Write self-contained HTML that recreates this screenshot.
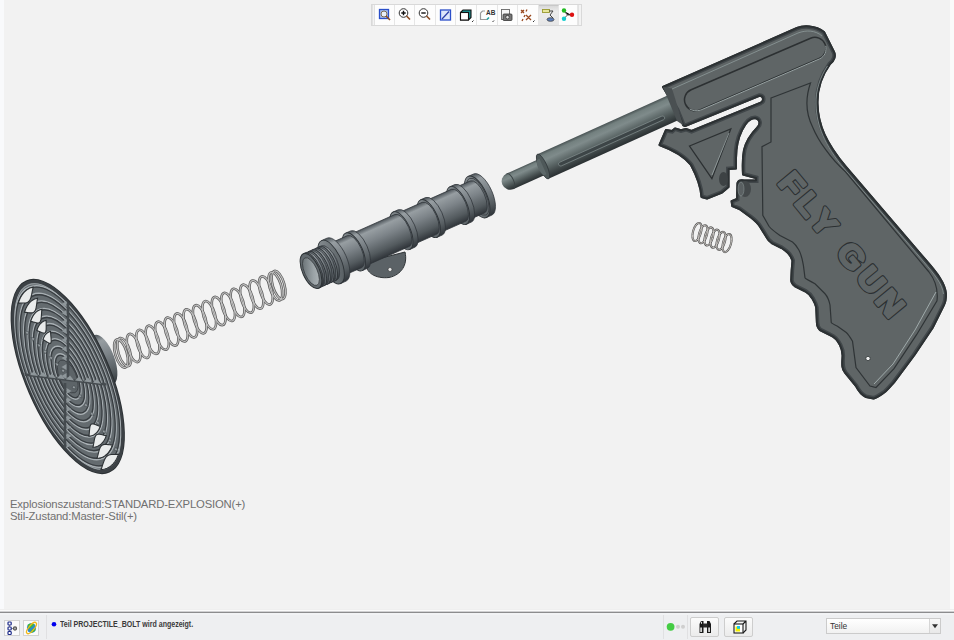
<!DOCTYPE html>
<html><head><meta charset="utf-8">
<style>
*{margin:0;padding:0;box-sizing:border-box}
html,body{width:954px;height:640px;overflow:hidden;background:#f2f2f2;font-family:"Liberation Sans",sans-serif}
#vp{position:absolute;left:0;top:0;width:954px;height:640px}
.abs{position:absolute}
#lstrip{left:0;top:0;width:4px;height:610px;background:#f9fafc}
#rstrip{left:950px;top:0;width:4px;height:610px;background:#fafafa}
#sep0{left:0;top:609px;width:954px;height:1px;background:#efefef}
#sep1{left:0;top:610px;width:954px;height:1px;background:#fbfbfb}
#sep2{left:0;top:611px;width:954px;height:1px;background:#d0d0d2}
#sep3{left:0;top:612px;width:954px;height:1px;background:#8c8c8e}
#status{left:0;top:613px;width:954px;height:27px;background:linear-gradient(#f2f3f5 0,#f2f3f5 2px,#eeeff1 2px)}
#info{left:10px;top:498px;font-size:11.3px;line-height:12px;letter-spacing:-0.17px;color:#707070;white-space:pre}
#stxt{left:60px;top:620px;font-size:8.2px;font-weight:bold;color:#3a3a3a;white-space:pre;transform:scaleX(0.86);transform-origin:0 0}
#dd{left:826px;top:618px;width:115px;height:16px;border:1px solid #cbcbcb;background:linear-gradient(#ffffff,#f1f1f1)}
#ddbtn{left:929px;top:619px;width:11px;height:14px;border-left:1px solid #d6d6d6;background:linear-gradient(#f8f8f8,#e8e8e8)}
#ddtxt{left:830px;top:621px;font-size:8.4px;color:#333}
#tb{left:371px;top:4px;width:211px;height:22px;border:1px solid #d9d9d9;background:#f3f3f3}
.tbb{position:absolute;top:5px;height:20px;background:#fdfdfd;border-right:1px solid #e6e6e6}
.sbox{position:absolute;top:620px;width:16px;height:16px;border:1px solid #d2d2d2;background:#fafafa}
.vsep{position:absolute;top:615px;width:1px;height:24px;background:#e0e0e2}
.sbtn{position:absolute;top:617px;width:29px;height:20px;border:1px solid #cdcdcd;border-radius:2px;background:linear-gradient(#fbfbfb,#ebebeb)}
</style></head><body>
<div id="vp">
<div class="abs" id="lstrip"></div>
<div class="abs" id="rstrip"></div>
<div class="abs" id="sep0"></div>
<div class="abs" id="sep1"></div>
<div class="abs" id="sep2"></div>
<div class="abs" id="sep3"></div>
<div class="abs" id="status"></div>
<div class="abs" id="info">Explosionszustand:STANDARD-EXPLOSION(+)
Stil-Zustand:Master-Stil(+)</div>
<div class="abs" id="stxt">Teil PROJECTILE_BOLT wird angezeigt.</div>
<div class="abs" id="dd"></div>
<div class="abs" id="ddbtn"></div>
<div class="abs" id="ddtxt">Teile</div>
<div class="abs" id="tb"></div>
<div class="abs" style="left:372px;top:5px;width:3px;height:20px;border-left:1px solid #e2e2e2;border-right:1px solid #e2e2e2"></div>
<div class="tbb" style="left:375px;width:20px"></div>
<div class="tbb" style="left:395px;width:20px"></div>
<div class="tbb" style="left:415px;width:21px"></div>
<div class="tbb" style="left:436px;width:20px"></div>
<div class="tbb" style="left:456px;width:21px"></div>
<div class="tbb" style="left:477px;width:21px"></div>
<div class="tbb" style="left:498px;width:20px"></div>
<div class="tbb" style="left:518px;width:21px"></div>
<div class="tbb" style="left:539px;width:20px;background:linear-gradient(#d9d9d9,#ececec 30%,#e6e6e6);border-top:1px solid #c8c8c8"></div>
<div class="tbb" style="left:559px;width:19px"></div>
<div class="abs" style="left:578px;top:5px;width:3px;height:20px;border-left:1px solid #e2e2e2"></div>
<svg class="abs" style="left:0;top:0" width="954" height="30" viewBox="0 0 954 30">
<!-- 1 zoom fit -->
<rect x="379.5" y="9.5" width="9" height="9" fill="#a9bff0" stroke="#2b4fc9" stroke-width="1.3"/>
<circle cx="384" cy="14" r="3" fill="#e8eef8" stroke="#7a6a50" stroke-width="1"/>
<path d="M386,16 L390,20" stroke="#8a4a20" stroke-width="1.6"/>
<!-- 2 zoom in -->
<circle cx="403.5" cy="13" r="4.3" fill="#fff" stroke="#333" stroke-width="1"/>
<path d="M401.3,13 h4.4 M403.5,10.8 v4.4" stroke="#111" stroke-width="1.4"/>
<path d="M406.5,16 L410,19.5" stroke="#8a4a20" stroke-width="1.6"/>
<!-- 3 zoom out -->
<circle cx="423.5" cy="13" r="4.3" fill="#fff" stroke="#333" stroke-width="1"/>
<path d="M421.3,13 h4.4" stroke="#111" stroke-width="1.4"/>
<path d="M426.5,16 L430,19.5" stroke="#8a4a20" stroke-width="1.6"/>
<!-- 4 refit -->
<rect x="440.5" y="10" width="10" height="10" fill="#dce6fa" stroke="#2b4fc9" stroke-width="1.3"/>
<path d="M442,19 L449,11.5" stroke="#2b3fa9" stroke-width="1.3"/>
<!-- 5 box -->
<path d="M460.5,12.5 L463,10 L471,10 L471,17.5 L468.5,20 L460.5,20 Z" fill="#1a8c8c" stroke="#111" stroke-width="1.1"/>
<rect x="460.5" y="12.5" width="8" height="7.5" fill="#fff" stroke="#111" stroke-width="1.1"/>
<path d="M472,22 l1.5,-1.5" stroke="#333" stroke-width="1"/>
<!-- 6 AB -->
<path d="M480.5,13 L482.5,11 L485,11 M480.5,13 L480.5,19.5 L487.5,19.5" fill="none" stroke="#9a9a9a" stroke-width="1.2"/>
<path d="M487,19.5 L489,17.5" stroke="#1aa0a0" stroke-width="1.6"/>
<text x="486" y="15" font-family="Liberation Sans" font-size="6.5" font-weight="bold" fill="#333">AB</text>
<path d="M492.5,22 l1.5,-1.5" stroke="#333" stroke-width="1"/>
<!-- 7 camera -->
<rect x="501.5" y="9.5" width="8" height="10" fill="#f6f6f6" stroke="#666" stroke-width="0.9"/>
<rect x="503" y="14" width="9" height="6.5" rx="1" fill="#777" stroke="#333" stroke-width="0.8"/>
<circle cx="507.5" cy="17.2" r="1.8" fill="#ddd" stroke="#222" stroke-width="0.7"/>
<!-- 8 x marks -->
<path d="M521,10 l3,3 M524,10 l-3,3 M527,9.5 l-1,2 M525,15 l-1,2 M523,19 l-1,2 M526,15 l5,5 M531,15 l-5,5" stroke="#9a4a20" stroke-width="1.3"/>
<path d="M533,22 l1.5,-1.5" stroke="#333" stroke-width="1"/>
<!-- 9 pressed -->
<rect x="542.5" y="9.5" width="7" height="3" fill="#e6e69a" stroke="#9a9a30" stroke-width="0.9"/>
<path d="M549,11 L553,11 L550,15 L553,18" fill="none" stroke="#444" stroke-width="1"/>
<ellipse cx="550.5" cy="19.5" rx="3.5" ry="1.8" fill="#5a7fc0" stroke="#444" stroke-width="0.8"/>
<!-- 10 balls -->
<path d="M564,11 L567.5,15 L571.5,15 M567.5,15 L564,18.5" stroke="#555" stroke-width="1"/>
<circle cx="564" cy="10.5" r="2.2" fill="#22bb22"/>
<circle cx="572" cy="14.8" r="2.2" fill="#dd1111"/>
<circle cx="564" cy="18.8" r="2.2" fill="#11cccc"/>
</svg>
<div class="sbox" style="left:4px"></div>
<div class="sbox" style="left:23px"></div>
<div class="vsep" style="left:46px"></div>
<div class="vsep" style="left:663px"></div>
<div class="vsep" style="left:687px"></div>
<div class="sbtn" style="left:690px"></div>
<div class="sbtn" style="left:724px"></div>
<svg class="abs" style="left:0;top:612px" width="954" height="28" viewBox="0 612 954 28">
<!-- tree icon -->
<path d="M9.5,623.5 L9.5,633 M9.5,628.5 L14.5,628.5" stroke="#777" stroke-width="0.8"/>
<rect x="8" y="622" width="3.2" height="3" rx="0.8" fill="#fff" stroke="#1c2a8a" stroke-width="1.2"/>
<rect x="8" y="627" width="3.2" height="3" rx="0.8" fill="#fff" stroke="#1c2a8a" stroke-width="1.2"/>
<rect x="8" y="631.5" width="3.2" height="3" rx="0.8" fill="#fff" stroke="#1c2a8a" stroke-width="1.2"/>
<circle cx="15" cy="628.5" r="1.6" fill="#aaa" stroke="#555" stroke-width="1.1"/>
<!-- globe -->
<ellipse cx="31.5" cy="628" rx="4.6" ry="4.8" fill="#2a8ad0"/>
<path d="M27.5,625 Q31,622.5 34.5,624.5 Q32,627.5 29,629 Z" fill="#3cb83c"/>
<path d="M32,629 Q34.5,628 35.8,630 Q33,633.2 30.5,633 Z" fill="#3cb83c"/>
<ellipse cx="31.5" cy="628" rx="7" ry="2.6" transform="rotate(-50 31.5 628)" fill="none" stroke="#f2b818" stroke-width="1.3"/>
<!-- blue dot -->
<circle cx="54" cy="624.2" r="2.3" fill="#0000ee"/>
<!-- dots -->
<circle cx="670.6" cy="626.8" r="3.9" fill="#44cc44"/>
<circle cx="678" cy="626.8" r="2" fill="#cfcfcf"/>
<circle cx="683" cy="626.8" r="2" fill="#cfcfcf"/>
<!-- binoculars -->
<path d="M699.5,624 L701,621 L703.5,621 L703.5,633 L699.5,633 Z" fill="#1a1a1a"/>
<path d="M707,621 L709.5,621 L711,624 L711,633 L707,633 Z" fill="#1a1a1a"/>
<rect x="703" y="623.5" width="4.5" height="4" fill="#2a2a2a"/>
<rect x="700.3" y="627.5" width="1.6" height="4.5" fill="#e8e8e8"/>
<rect x="708.3" y="627.5" width="1.6" height="4.5" fill="#e8e8e8"/>
<rect x="701" y="621.8" width="1" height="2" fill="#ddd"/>
<!-- box -->
<path d="M734,624 L737,621 L746,621 L746,630 L743,633 M743,624 L746,621" fill="none" stroke="#1a1a1a" stroke-width="1.1"/>
<rect x="734" y="624" width="9" height="9" fill="#fff" stroke="#1a1a1a" stroke-width="1.1"/>
<rect x="735.5" y="626.5" width="4.5" height="5" fill="#f4f000"/>
<rect x="737" y="626" width="3" height="2.8" fill="#12c8f0"/>
<!-- dropdown arrow -->
<path d="M932,624.2 L938,624.2 L935,628.2 Z" fill="#333"/>
</svg>
<svg class="abs" style="left:0;top:0" width="954" height="640" viewBox="0 0 954 640">
<defs>
<linearGradient id="rodg" x1="0" y1="0" x2="0" y2="1">
<stop offset="0" stop-color="#485253"/><stop offset="0.12" stop-color="#73807f"/><stop offset="0.3" stop-color="#7f8b8b"/><stop offset="0.55" stop-color="#5f6a6a"/><stop offset="0.8" stop-color="#404849"/><stop offset="1" stop-color="#2a3032"/>
</linearGradient>
<linearGradient id="tubeg" x1="0" y1="0" x2="0" y2="1">
<stop offset="0" stop-color="#4e555a"/><stop offset="0.14" stop-color="#979ea2"/><stop offset="0.42" stop-color="#7c8388"/><stop offset="0.78" stop-color="#535a5e"/><stop offset="1" stop-color="#30353a"/>
</linearGradient>
<linearGradient id="boreg" x1="0" y1="0" x2="1" y2="1"><stop offset="0" stop-color="#5d6569"/><stop offset="0.6" stop-color="#9aa2a6"/><stop offset="1" stop-color="#b5bbbe"/></linearGradient>
<linearGradient id="faceg" x1="0" y1="0" x2="1" y2="1">
<stop offset="0" stop-color="#8e9599"/><stop offset="1" stop-color="#50575b"/>
</linearGradient>
</defs>
<g transform="translate(98,362) rotate(-20)">
<path d="M-14,-26.5 L6,-26.5 A11,26.5 0 0 1 6,26.5 L-14,26.5 Z" fill="url(#tubeg)"/>
</g>
<g transform="translate(67.75,376.5) rotate(66.5)">
<ellipse cx="0" cy="0" rx="103.9" ry="41.5" fill="#646b6f" stroke="#2b3033" stroke-width="1.8"/>
<ellipse cx="0" cy="0" rx="102.1" ry="39.9" fill="none" stroke="#3c4145" stroke-width="3.2"/>
<ellipse cx="0" cy="0" rx="99.7" ry="38.1" fill="none" stroke="#9ba2a6" stroke-width="0.9"/>
<ellipse cx="0" cy="0" rx="97.38" ry="39.06" fill="none" stroke="#a9b0b4" stroke-width="1.4"/>
<ellipse cx="0" cy="0" rx="95.78" ry="38.26" fill="none" stroke="#383d41" stroke-width="1.3"/>
<ellipse cx="0" cy="0" rx="89.27" ry="35.82" fill="none" stroke="#a9b0b4" stroke-width="1.4"/>
<ellipse cx="0" cy="0" rx="87.67" ry="35.02" fill="none" stroke="#383d41" stroke-width="1.3"/>
<ellipse cx="0" cy="0" rx="81.15" ry="32.57" fill="none" stroke="#a9b0b4" stroke-width="1.4"/>
<ellipse cx="0" cy="0" rx="79.55" ry="31.77" fill="none" stroke="#383d41" stroke-width="1.3"/>
<ellipse cx="0" cy="0" rx="73.03" ry="29.33" fill="none" stroke="#a9b0b4" stroke-width="1.4"/>
<ellipse cx="0" cy="0" rx="71.43" ry="28.53" fill="none" stroke="#383d41" stroke-width="1.3"/>
<ellipse cx="0" cy="0" rx="64.91" ry="26.09" fill="none" stroke="#a9b0b4" stroke-width="1.4"/>
<ellipse cx="0" cy="0" rx="63.31" ry="25.29" fill="none" stroke="#383d41" stroke-width="1.3"/>
<ellipse cx="0" cy="0" rx="56.8" ry="22.85" fill="none" stroke="#a9b0b4" stroke-width="1.4"/>
<ellipse cx="0" cy="0" rx="55.2" ry="22.05" fill="none" stroke="#383d41" stroke-width="1.3"/>
<ellipse cx="0" cy="0" rx="48.68" ry="19.6" fill="none" stroke="#a9b0b4" stroke-width="1.4"/>
<ellipse cx="0" cy="0" rx="47.08" ry="18.8" fill="none" stroke="#383d41" stroke-width="1.3"/>
<ellipse cx="0" cy="0" rx="40.56" ry="16.36" fill="none" stroke="#a9b0b4" stroke-width="1.4"/>
<ellipse cx="0" cy="0" rx="38.96" ry="15.56" fill="none" stroke="#383d41" stroke-width="1.3"/>
<ellipse cx="0" cy="0" rx="32.45" ry="13.12" fill="none" stroke="#a9b0b4" stroke-width="1.4"/>
<ellipse cx="0" cy="0" rx="30.85" ry="12.32" fill="none" stroke="#383d41" stroke-width="1.3"/>
<ellipse cx="0" cy="0" rx="24.33" ry="9.88" fill="none" stroke="#a9b0b4" stroke-width="1.4"/>
<ellipse cx="0" cy="0" rx="22.73" ry="9.08" fill="none" stroke="#383d41" stroke-width="1.3"/>
<ellipse cx="0" cy="0" rx="17.66" ry="8.3" fill="#5d6468" stroke="#3a3f43" stroke-width="0.8"/>
</g>
<clipPath id="dclip"><ellipse cx="67.75" cy="376.5" rx="101.4" ry="39.5" transform="rotate(66.5 67.75 376.5)"/></clipPath>
<g clip-path="url(#dclip)">
<path d="M68,284 L68,377 M65,383 L65,470" stroke="#454b4f" stroke-width="2.6"/>
<path d="M24,374.5 L106,384.5" stroke="#454b4f" stroke-width="2.6"/>
<path d="M66.5,292 l-5,3 l5,3 z" fill="#8e969a"/>
<path d="M66.5,301 l-5,3 l5,3 z" fill="#8e969a"/>
<path d="M66.5,310 l-5,3 l5,3 z" fill="#8e969a"/>
<path d="M66.5,319 l-5,3 l5,3 z" fill="#8e969a"/>
<path d="M66.5,328 l-5,3 l5,3 z" fill="#8e969a"/>
<path d="M66.5,337 l-5,3 l5,3 z" fill="#8e969a"/>
<path d="M66.5,346 l-5,3 l5,3 z" fill="#8e969a"/>
<path d="M66.5,355 l-5,3 l5,3 z" fill="#8e969a"/>
<path d="M66.5,364 l-5,3 l5,3 z" fill="#8e969a"/>
<path d="M66.5,373 l-5,3 l5,3 z" fill="#8e969a"/>
<path d="M66.5,388 l5,3 l-5,3 z" fill="#8e969a"/>
<path d="M66.5,397 l5,3 l-5,3 z" fill="#8e969a"/>
<path d="M66.5,406 l5,3 l-5,3 z" fill="#8e969a"/>
<path d="M66.5,415 l5,3 l-5,3 z" fill="#8e969a"/>
<path d="M66.5,424 l5,3 l-5,3 z" fill="#8e969a"/>
<path d="M66.5,433 l5,3 l-5,3 z" fill="#8e969a"/>
<path d="M66.5,442 l5,3 l-5,3 z" fill="#8e969a"/>
<path d="M66.5,451 l5,3 l-5,3 z" fill="#8e969a"/>
<path d="M66.5,460 l5,3 l-5,3 z" fill="#8e969a"/>
<path d="M30,375 l4,-4 l4,5 z" fill="#8e969a"/>
<path d="M39,376.1 l4,-4 l4,5 z" fill="#8e969a"/>
<path d="M48,377.2 l4,-4 l4,5 z" fill="#8e969a"/>
<path d="M57,378.3 l4,-4 l4,5 z" fill="#8e969a"/>
<path d="M66,379.4 l4,-4 l4,5 z" fill="#8e969a"/>
<path d="M75,380.5 l4,-4 l4,5 z" fill="#8e969a"/>
<path d="M84,381.6 l4,-4 l4,5 z" fill="#8e969a"/>
<path d="M93,382.7 l4,-4 l4,5 z" fill="#8e969a"/>
<path d="M29,332 l-4,-1 l2,4 z" fill="#9aa1a5" stroke="#3a4044" stroke-width="0.5"/>
<path d="M35,338.33 l-4,-1 l2,4 z" fill="#9aa1a5" stroke="#3a4044" stroke-width="0.5"/>
<path d="M41,344.67 l-4,-1 l2,4 z" fill="#9aa1a5" stroke="#3a4044" stroke-width="0.5"/>
<path d="M47,351 l-4,-1 l2,4 z" fill="#9aa1a5" stroke="#3a4044" stroke-width="0.5"/>
<path d="M53,357.33 l-4,-1 l2,4 z" fill="#9aa1a5" stroke="#3a4044" stroke-width="0.5"/>
<path d="M59,363.67 l-4,-1 l2,4 z" fill="#9aa1a5" stroke="#3a4044" stroke-width="0.5"/>
<path d="M65,370 l-4,-1 l2,4 z" fill="#9aa1a5" stroke="#3a4044" stroke-width="0.5"/>
<path d="M72,388 l4,1 l-2,-4 z" fill="#9aa1a5" stroke="#3a4044" stroke-width="0.5"/>
<path d="M78,396.86 l4,1 l-2,-4 z" fill="#9aa1a5" stroke="#3a4044" stroke-width="0.5"/>
<path d="M84,405.71 l4,1 l-2,-4 z" fill="#9aa1a5" stroke="#3a4044" stroke-width="0.5"/>
<path d="M90,414.57 l4,1 l-2,-4 z" fill="#9aa1a5" stroke="#3a4044" stroke-width="0.5"/>
<path d="M96,423.43 l4,1 l-2,-4 z" fill="#9aa1a5" stroke="#3a4044" stroke-width="0.5"/>
<path d="M102,432.29 l4,1 l-2,-4 z" fill="#9aa1a5" stroke="#3a4044" stroke-width="0.5"/>
<path d="M108,441.14 l4,1 l-2,-4 z" fill="#9aa1a5" stroke="#3a4044" stroke-width="0.5"/>
<path d="M114,450 l4,1 l-2,-4 z" fill="#9aa1a5" stroke="#3a4044" stroke-width="0.5"/>
</g>
<path d="M18.32,303.17 L18.8,301.67 L19.33,300.24 L19.9,298.87 L20.52,297.58 L21.17,296.35 L21.87,295.19 L22.61,294.1 L23.39,293.09 L24.21,292.15 L25.07,291.29 L25.96,290.5 L26.89,289.79 L27.86,289.15 L28.87,288.59 L29.91,288.11 L30.98,287.7 L32.08,287.38 L33.22,287.13 L33.22,287.13 L32.76,289.05 L32.35,290.98 L31.97,292.88 L31.59,294.69 L31.19,296.37 L30.74,297.89 L30.23,299.22 L29.64,300.34 L28.94,301.25 L28.14,301.96 L27.22,302.46 L26.19,302.79 L25.05,302.97 L23.82,303.05 L22.5,303.06 L21.13,303.06 L19.73,303.08 L18.32,303.17Z" fill="#e9ebeb" stroke="#2c3134" stroke-width="1.1"/>
<path d="M24.49,312.28 L24.92,310.96 L25.38,309.71 L25.88,308.51 L26.42,307.37 L27,306.3 L27.61,305.28 L28.25,304.33 L28.94,303.44 L29.65,302.62 L30.41,301.86 L31.19,301.17 L32.01,300.55 L32.86,299.99 L33.74,299.5 L34.65,299.08 L35.59,298.72 L36.56,298.44 L37.55,298.22 L37.55,298.22 L37.23,300.11 L36.96,302 L36.71,303.84 L36.46,305.59 L36.18,307.21 L35.86,308.65 L35.46,309.89 L34.98,310.92 L34.39,311.72 L33.69,312.31 L32.87,312.69 L31.93,312.88 L30.87,312.92 L29.72,312.85 L28.48,312.7 L27.18,312.52 L25.84,312.37 L24.49,312.28Z" fill="#e9ebeb" stroke="#2c3134" stroke-width="1.1"/>
<path d="M30.67,321.38 L31.03,320.25 L31.43,319.17 L31.86,318.15 L32.32,317.17 L32.82,316.24 L33.34,315.37 L33.9,314.56 L34.48,313.79 L35.1,313.09 L35.75,312.44 L36.42,311.84 L37.12,311.31 L37.85,310.83 L38.61,310.41 L39.39,310.04 L40.2,309.74 L41.03,309.49 L41.88,309.31 L41.88,309.31 L41.7,311.16 L41.57,313.02 L41.45,314.81 L41.33,316.5 L41.18,318.05 L40.97,319.41 L40.69,320.56 L40.32,321.49 L39.84,322.19 L39.23,322.66 L38.51,322.91 L37.66,322.97 L36.69,322.87 L35.62,322.64 L34.46,322.33 L33.23,321.99 L31.95,321.66 L30.67,321.38Z" fill="#e9ebeb" stroke="#2c3134" stroke-width="1.1"/>
<path d="M36.84,330.49 L37.15,329.54 L37.48,328.64 L37.84,327.78 L38.22,326.97 L38.64,326.19 L39.08,325.46 L39.54,324.78 L40.03,324.14 L40.55,323.55 L41.09,323.01 L41.65,322.51 L42.24,322.07 L42.84,321.66 L43.48,321.31 L44.13,321.01 L44.81,320.76 L45.5,320.55 L46.22,320.4 L46.22,320.4 L46.18,322.22 L46.18,324.03 L46.19,325.78 L46.2,327.41 L46.17,328.88 L46.09,330.17 L45.92,331.23 L45.66,332.07 L45.28,332.66 L44.78,333.01 L44.15,333.14 L43.4,333.06 L42.52,332.82 L41.52,332.44 L40.44,331.97 L39.28,331.46 L38.07,330.95 L36.84,330.49Z" fill="#e9ebeb" stroke="#2c3134" stroke-width="1.1"/>
<path d="M43.02,339.59 L43.26,338.83 L43.53,338.11 L43.82,337.42 L44.13,336.76 L44.46,336.14 L44.81,335.56 L45.19,335.01 L45.58,334.5 L45.99,334.02 L46.43,333.58 L46.88,333.19 L47.35,332.83 L47.84,332.5 L48.35,332.22 L48.87,331.98 L49.41,331.77 L49.97,331.61 L50.55,331.48 L50.55,331.48 L50.65,333.28 L50.78,335.05 L50.93,336.75 L51.07,338.32 L51.17,339.72 L51.2,340.93 L51.15,341.91 L51,342.64 L50.73,343.12 L50.33,343.36 L49.8,343.36 L49.13,343.16 L48.34,342.77 L47.43,342.24 L46.42,341.61 L45.33,340.92 L44.18,340.24 L43.02,339.59Z" fill="#e9ebeb" stroke="#2c3134" stroke-width="1.1"/>
<path d="M100.2,426.34 L99.82,427.35 L99.41,428.31 L98.97,429.21 L98.5,430.07 L98,430.87 L97.47,431.61 L96.9,432.31 L96.31,432.94 L95.69,433.52 L95.04,434.05 L94.37,434.51 L93.67,434.92 L92.94,435.28 L92.18,435.57 L91.4,435.8 L90.6,435.98 L89.78,436.1 L88.93,436.15 L88.93,436.15 L89.15,434.42 L89.31,432.68 L89.46,431 L89.6,429.41 L89.76,427.98 L89.98,426.72 L90.26,425.68 L90.63,424.86 L91.1,424.28 L91.7,423.93 L92.41,423.8 L93.24,423.87 L94.2,424.11 L95.26,424.48 L96.41,424.94 L97.64,425.43 L98.91,425.92 L100.2,426.34Z" fill="#e9ebeb" stroke="#2c3134" stroke-width="1.1"/>
<path d="M106.31,435.64 L105.86,436.84 L105.38,437.97 L104.85,439.05 L104.3,440.06 L103.7,441.01 L103.07,441.89 L102.4,442.71 L101.7,443.47 L100.97,444.16 L100.2,444.78 L99.4,445.33 L98.56,445.82 L97.7,446.23 L96.81,446.58 L95.88,446.86 L94.93,447.07 L93.96,447.2 L92.95,447.27 L92.95,447.27 L93.32,445.53 L93.65,443.77 L93.94,442.05 L94.22,440.43 L94.53,438.93 L94.87,437.61 L95.29,436.49 L95.78,435.59 L96.38,434.91 L97.09,434.45 L97.91,434.21 L98.85,434.15 L99.9,434.25 L101.06,434.47 L102.3,434.77 L103.6,435.1 L104.95,435.4 L106.31,435.64Z" fill="#e9ebeb" stroke="#2c3134" stroke-width="1.1"/>
<path d="M112.42,444.94 L111.9,446.32 L111.34,447.64 L110.74,448.88 L110.09,450.05 L109.4,451.15 L108.67,452.17 L107.9,453.12 L107.09,453.99 L106.24,454.79 L105.35,455.51 L104.43,456.15 L103.46,456.71 L102.47,457.19 L101.43,457.59 L100.36,457.91 L99.26,458.15 L98.13,458.31 L96.97,458.39 L96.97,458.39 L97.5,456.64 L97.98,454.86 L98.42,453.11 L98.85,451.44 L99.29,449.89 L99.77,448.51 L100.32,447.31 L100.94,446.32 L101.65,445.54 L102.48,444.98 L103.41,444.62 L104.45,444.43 L105.61,444.39 L106.85,444.47 L108.18,444.6 L109.57,444.76 L110.99,444.89 L112.42,444.94Z" fill="#e9ebeb" stroke="#2c3134" stroke-width="1.1"/>
<path d="M118.53,454.24 L117.94,455.81 L117.31,457.3 L116.62,458.71 L115.89,460.04 L115.11,461.29 L114.28,462.45 L113.4,463.53 L112.48,464.52 L111.52,465.42 L110.51,466.24 L109.46,466.96 L108.36,467.6 L107.23,468.15 L106.06,468.6 L104.85,468.97 L103.6,469.24 L102.31,469.42 L100.99,469.51 L100.99,469.51 L101.68,467.75 L102.31,465.94 L102.9,464.16 L103.47,462.45 L104.06,460.85 L104.67,459.4 L105.35,458.13 L106.09,457.05 L106.93,456.18 L107.87,455.5 L108.91,455.02 L110.06,454.71 L111.31,454.53 L112.65,454.46 L114.06,454.44 L115.53,454.43 L117.03,454.38 L118.53,454.24Z" fill="#e9ebeb" stroke="#2c3134" stroke-width="1.1"/>
<g transform="translate(121,353.5) rotate(-23.5)">
<ellipse cx="0" cy="0" rx="5.8" ry="14.6" transform="rotate(7 0 0)" fill="none" stroke="#5c5c5c" stroke-width="2.6"/>
<ellipse cx="3.5" cy="0" rx="5.8" ry="14.6" transform="rotate(7 3.5 0)" fill="none" stroke="#5c5c5c" stroke-width="2.6"/>
<ellipse cx="13.8" cy="0" rx="5.8" ry="14.6" transform="rotate(7 13.8 0)" fill="none" stroke="#5c5c5c" stroke-width="2.6"/>
<ellipse cx="24.1" cy="0" rx="5.8" ry="14.6" transform="rotate(7 24.1 0)" fill="none" stroke="#5c5c5c" stroke-width="2.6"/>
<ellipse cx="34.4" cy="0" rx="5.8" ry="14.6" transform="rotate(7 34.4 0)" fill="none" stroke="#5c5c5c" stroke-width="2.6"/>
<ellipse cx="44.7" cy="0" rx="5.8" ry="14.6" transform="rotate(7 44.7 0)" fill="none" stroke="#5c5c5c" stroke-width="2.6"/>
<ellipse cx="55" cy="0" rx="5.8" ry="14.6" transform="rotate(7 55 0)" fill="none" stroke="#5c5c5c" stroke-width="2.6"/>
<ellipse cx="65.3" cy="0" rx="5.8" ry="14.6" transform="rotate(7 65.3 0)" fill="none" stroke="#5c5c5c" stroke-width="2.6"/>
<ellipse cx="75.6" cy="0" rx="5.8" ry="14.6" transform="rotate(7 75.6 0)" fill="none" stroke="#5c5c5c" stroke-width="2.6"/>
<ellipse cx="85.9" cy="0" rx="5.8" ry="14.6" transform="rotate(7 85.9 0)" fill="none" stroke="#5c5c5c" stroke-width="2.6"/>
<ellipse cx="96.2" cy="0" rx="5.8" ry="14.6" transform="rotate(7 96.2 0)" fill="none" stroke="#5c5c5c" stroke-width="2.6"/>
<ellipse cx="106.5" cy="0" rx="5.8" ry="14.6" transform="rotate(7 106.5 0)" fill="none" stroke="#5c5c5c" stroke-width="2.6"/>
<ellipse cx="116.8" cy="0" rx="5.8" ry="14.6" transform="rotate(7 116.8 0)" fill="none" stroke="#5c5c5c" stroke-width="2.6"/>
<ellipse cx="127.1" cy="0" rx="5.8" ry="14.6" transform="rotate(7 127.1 0)" fill="none" stroke="#5c5c5c" stroke-width="2.6"/>
<ellipse cx="137.4" cy="0" rx="5.8" ry="14.6" transform="rotate(7 137.4 0)" fill="none" stroke="#5c5c5c" stroke-width="2.6"/>
<ellipse cx="147.7" cy="0" rx="5.8" ry="14.6" transform="rotate(7 147.7 0)" fill="none" stroke="#5c5c5c" stroke-width="2.6"/>
<ellipse cx="158" cy="0" rx="5.8" ry="14.6" transform="rotate(7 158 0)" fill="none" stroke="#5c5c5c" stroke-width="2.6"/>
<ellipse cx="168.3" cy="0" rx="5.8" ry="14.6" transform="rotate(7 168.3 0)" fill="none" stroke="#5c5c5c" stroke-width="2.6"/>
<ellipse cx="171.8" cy="0" rx="5.8" ry="14.6" transform="rotate(7 171.8 0)" fill="none" stroke="#5c5c5c" stroke-width="2.6"/>
<ellipse cx="0" cy="0" rx="5.8" ry="14.6" transform="rotate(7 0 0)" fill="none" stroke="#c2c2c2" stroke-width="1.1"/>
<ellipse cx="3.5" cy="0" rx="5.8" ry="14.6" transform="rotate(7 3.5 0)" fill="none" stroke="#c2c2c2" stroke-width="1.1"/>
<ellipse cx="13.8" cy="0" rx="5.8" ry="14.6" transform="rotate(7 13.8 0)" fill="none" stroke="#c2c2c2" stroke-width="1.1"/>
<ellipse cx="24.1" cy="0" rx="5.8" ry="14.6" transform="rotate(7 24.1 0)" fill="none" stroke="#c2c2c2" stroke-width="1.1"/>
<ellipse cx="34.4" cy="0" rx="5.8" ry="14.6" transform="rotate(7 34.4 0)" fill="none" stroke="#c2c2c2" stroke-width="1.1"/>
<ellipse cx="44.7" cy="0" rx="5.8" ry="14.6" transform="rotate(7 44.7 0)" fill="none" stroke="#c2c2c2" stroke-width="1.1"/>
<ellipse cx="55" cy="0" rx="5.8" ry="14.6" transform="rotate(7 55 0)" fill="none" stroke="#c2c2c2" stroke-width="1.1"/>
<ellipse cx="65.3" cy="0" rx="5.8" ry="14.6" transform="rotate(7 65.3 0)" fill="none" stroke="#c2c2c2" stroke-width="1.1"/>
<ellipse cx="75.6" cy="0" rx="5.8" ry="14.6" transform="rotate(7 75.6 0)" fill="none" stroke="#c2c2c2" stroke-width="1.1"/>
<ellipse cx="85.9" cy="0" rx="5.8" ry="14.6" transform="rotate(7 85.9 0)" fill="none" stroke="#c2c2c2" stroke-width="1.1"/>
<ellipse cx="96.2" cy="0" rx="5.8" ry="14.6" transform="rotate(7 96.2 0)" fill="none" stroke="#c2c2c2" stroke-width="1.1"/>
<ellipse cx="106.5" cy="0" rx="5.8" ry="14.6" transform="rotate(7 106.5 0)" fill="none" stroke="#c2c2c2" stroke-width="1.1"/>
<ellipse cx="116.8" cy="0" rx="5.8" ry="14.6" transform="rotate(7 116.8 0)" fill="none" stroke="#c2c2c2" stroke-width="1.1"/>
<ellipse cx="127.1" cy="0" rx="5.8" ry="14.6" transform="rotate(7 127.1 0)" fill="none" stroke="#c2c2c2" stroke-width="1.1"/>
<ellipse cx="137.4" cy="0" rx="5.8" ry="14.6" transform="rotate(7 137.4 0)" fill="none" stroke="#c2c2c2" stroke-width="1.1"/>
<ellipse cx="147.7" cy="0" rx="5.8" ry="14.6" transform="rotate(7 147.7 0)" fill="none" stroke="#c2c2c2" stroke-width="1.1"/>
<ellipse cx="158" cy="0" rx="5.8" ry="14.6" transform="rotate(7 158 0)" fill="none" stroke="#c2c2c2" stroke-width="1.1"/>
<ellipse cx="168.3" cy="0" rx="5.8" ry="14.6" transform="rotate(7 168.3 0)" fill="none" stroke="#c2c2c2" stroke-width="1.1"/>
<ellipse cx="171.8" cy="0" rx="5.8" ry="14.6" transform="rotate(7 171.8 0)" fill="none" stroke="#c2c2c2" stroke-width="1.1"/>
</g>
<path d="M366,262 C365,273 376,279 389,277.5 C401,275 408,265 405,252 Z" fill="#5b6266" stroke="#2e3336" stroke-width="1"/>
<circle cx="390" cy="269.5" r="2" fill="#e8eaea" stroke="#333" stroke-width="0.6"/>
<g transform="translate(311,271) rotate(-24)">
<path d="M182,-22.5 L188,-22.5 A9.68,22.5 0 0 1 188,22.5 L182,22.5 Z" fill="url(#tubeg)" stroke="#30353a" stroke-width="0.7"/><ellipse cx="182" cy="0" rx="9.68" ry="22.5" fill="url(#faceg)" stroke="#2e3337" stroke-width="0.9"/>
<ellipse cx="182.6" cy="0" rx="8.4" ry="20" fill="none" stroke="#3a3f43" stroke-width="0.8"/>
<path d="M166.5,-17.5 L182,-17.5 A7.52,17.5 0 0 1 182,17.5 L166.5,17.5 Z" fill="url(#tubeg)" stroke="#30353a" stroke-width="0.7"/><ellipse cx="166.5" cy="0" rx="7.52" ry="17.5" fill="url(#faceg)" stroke="#2e3337" stroke-width="0.9"/>
<path d="M161,-20.5 L166.5,-20.5 A8.81,20.5 0 0 1 166.5,20.5 L161,20.5 Z" fill="url(#tubeg)" stroke="#30353a" stroke-width="0.7"/><ellipse cx="161" cy="0" rx="8.81" ry="20.5" fill="url(#faceg)" stroke="#2e3337" stroke-width="0.9"/>
<path d="M134.5,-17.5 L161.5,-17.5 A7.52,17.5 0 0 1 161.5,17.5 L134.5,17.5 Z" fill="url(#tubeg)" stroke="#30353a" stroke-width="0.7"/><ellipse cx="134.5" cy="0" rx="7.52" ry="17.5" fill="url(#faceg)" stroke="#2e3337" stroke-width="0.9"/>
<path d="M129,-20.5 L134.5,-20.5 A8.81,20.5 0 0 1 134.5,20.5 L129,20.5 Z" fill="url(#tubeg)" stroke="#30353a" stroke-width="0.7"/><ellipse cx="129" cy="0" rx="8.81" ry="20.5" fill="url(#faceg)" stroke="#2e3337" stroke-width="0.9"/>
<path d="M104.5,-17.5 L129.5,-17.5 A7.52,17.5 0 0 1 129.5,17.5 L104.5,17.5 Z" fill="url(#tubeg)" stroke="#30353a" stroke-width="0.7"/><ellipse cx="104.5" cy="0" rx="7.52" ry="17.5" fill="url(#faceg)" stroke="#2e3337" stroke-width="0.9"/>
<path d="M99,-20.5 L104.5,-20.5 A8.81,20.5 0 0 1 104.5,20.5 L99,20.5 Z" fill="url(#tubeg)" stroke="#30353a" stroke-width="0.7"/><ellipse cx="99" cy="0" rx="8.81" ry="20.5" fill="url(#faceg)" stroke="#2e3337" stroke-width="0.9"/>
<path d="M52.5,-17.5 L99.5,-17.5 A7.52,17.5 0 0 1 99.5,17.5 L52.5,17.5 Z" fill="url(#tubeg)" stroke="#30353a" stroke-width="0.7"/><ellipse cx="52.5" cy="0" rx="7.52" ry="17.5" fill="url(#faceg)" stroke="#2e3337" stroke-width="0.9"/>
<path d="M47,-20.5 L52.5,-20.5 A8.81,20.5 0 0 1 52.5,20.5 L47,20.5 Z" fill="url(#tubeg)" stroke="#30353a" stroke-width="0.7"/><ellipse cx="47" cy="0" rx="8.81" ry="20.5" fill="url(#faceg)" stroke="#2e3337" stroke-width="0.9"/>
<path d="M28,-17.5 L47.5,-17.5 A7.52,17.5 0 0 1 47.5,17.5 L28,17.5 Z" fill="url(#tubeg)" stroke="#30353a" stroke-width="0.7"/><ellipse cx="28" cy="0" rx="7.52" ry="17.5" fill="url(#faceg)" stroke="#2e3337" stroke-width="0.9"/>
<path d="M22,-23.5 L28,-23.5 A10.11,23.5 0 0 1 28,23.5 L22,23.5 Z" fill="url(#tubeg)" stroke="#30353a" stroke-width="0.7"/><ellipse cx="22" cy="0" rx="10.11" ry="23.5" fill="url(#faceg)" stroke="#2e3337" stroke-width="0.9"/>
<path d="M19.7,-15.5 L21.5,-15.5 A6.67,15.5 0 0 1 21.5,15.5 L19.7,15.5 Z" fill="url(#tubeg)" stroke="#30353a" stroke-width="0.5"/><ellipse cx="19.7" cy="0" rx="6.67" ry="15.5" fill="#353a3e" stroke="#2e3337" stroke-width="0.9"/>
<path d="M17.5,-18.8 L19.7,-18.8 A8.08,18.8 0 0 1 19.7,18.8 L17.5,18.8 Z" fill="url(#tubeg)" stroke="#30353a" stroke-width="0.6"/><ellipse cx="17.5" cy="0" rx="8.08" ry="18.8" fill="#6e757a" stroke="#2e3337" stroke-width="0.9"/>
<path d="M15.7,-15.5 L17.5,-15.5 A6.67,15.5 0 0 1 17.5,15.5 L15.7,15.5 Z" fill="url(#tubeg)" stroke="#30353a" stroke-width="0.5"/><ellipse cx="15.7" cy="0" rx="6.67" ry="15.5" fill="#353a3e" stroke="#2e3337" stroke-width="0.9"/>
<path d="M13.5,-18.8 L15.7,-18.8 A8.08,18.8 0 0 1 15.7,18.8 L13.5,18.8 Z" fill="url(#tubeg)" stroke="#30353a" stroke-width="0.6"/><ellipse cx="13.5" cy="0" rx="8.08" ry="18.8" fill="#6e757a" stroke="#2e3337" stroke-width="0.9"/>
<path d="M11.7,-15.5 L13.5,-15.5 A6.67,15.5 0 0 1 13.5,15.5 L11.7,15.5 Z" fill="url(#tubeg)" stroke="#30353a" stroke-width="0.5"/><ellipse cx="11.7" cy="0" rx="6.67" ry="15.5" fill="#353a3e" stroke="#2e3337" stroke-width="0.9"/>
<path d="M9.5,-18.8 L11.7,-18.8 A8.08,18.8 0 0 1 11.7,18.8 L9.5,18.8 Z" fill="url(#tubeg)" stroke="#30353a" stroke-width="0.6"/><ellipse cx="9.5" cy="0" rx="8.08" ry="18.8" fill="#6e757a" stroke="#2e3337" stroke-width="0.9"/>
<path d="M7.7,-15.5 L9.5,-15.5 A6.67,15.5 0 0 1 9.5,15.5 L7.7,15.5 Z" fill="url(#tubeg)" stroke="#30353a" stroke-width="0.5"/><ellipse cx="7.7" cy="0" rx="6.67" ry="15.5" fill="#353a3e" stroke="#2e3337" stroke-width="0.9"/>
<path d="M5.5,-18.8 L7.7,-18.8 A8.08,18.8 0 0 1 7.7,18.8 L5.5,18.8 Z" fill="url(#tubeg)" stroke="#30353a" stroke-width="0.6"/><ellipse cx="5.5" cy="0" rx="8.08" ry="18.8" fill="#6e757a" stroke="#2e3337" stroke-width="0.9"/>
<path d="M3.7,-15.5 L5.5,-15.5 A6.67,15.5 0 0 1 5.5,15.5 L3.7,15.5 Z" fill="url(#tubeg)" stroke="#30353a" stroke-width="0.5"/><ellipse cx="3.7" cy="0" rx="6.67" ry="15.5" fill="#353a3e" stroke="#2e3337" stroke-width="0.9"/>
<path d="M1.5,-18.8 L3.7,-18.8 A8.08,18.8 0 0 1 3.7,18.8 L1.5,18.8 Z" fill="url(#tubeg)" stroke="#30353a" stroke-width="0.6"/><ellipse cx="1.5" cy="0" rx="8.08" ry="18.8" fill="#6e757a" stroke="#2e3337" stroke-width="0.9"/>
<path d="M0,-18.8 L1.5,-18.8 A8.08,18.8 0 0 1 1.5,18.8 L0,18.8 Z" fill="url(#tubeg)" stroke="#30353a" stroke-width="0.6"/>
<ellipse cx="0" cy="0" rx="8.46" ry="18.8" fill="#62696e" stroke="#2e3336" stroke-width="1"/>
<ellipse cx="-0.3" cy="0.5" rx="6.4" ry="15" fill="url(#boreg)" stroke="#3a3f42" stroke-width="0.8"/>
</g>
<g transform="translate(697,232) rotate(20.3)">
<ellipse cx="0" cy="0" rx="4" ry="9.3" transform="rotate(-5 0 0)" fill="none" stroke="#555" stroke-width="2.1"/>
<ellipse cx="6.4" cy="0" rx="4" ry="9.3" transform="rotate(-5 6.4 0)" fill="none" stroke="#555" stroke-width="2.1"/>
<ellipse cx="12.8" cy="0" rx="4" ry="9.3" transform="rotate(-5 12.8 0)" fill="none" stroke="#555" stroke-width="2.1"/>
<ellipse cx="19.2" cy="0" rx="4" ry="9.3" transform="rotate(-5 19.2 0)" fill="none" stroke="#555" stroke-width="2.1"/>
<ellipse cx="25.6" cy="0" rx="4" ry="9.3" transform="rotate(-5 25.6 0)" fill="none" stroke="#555" stroke-width="2.1"/>
<ellipse cx="32" cy="0" rx="4" ry="9.3" transform="rotate(-5 32 0)" fill="none" stroke="#555" stroke-width="2.1"/>
<ellipse cx="0" cy="0" rx="4" ry="9.3" transform="rotate(-5 0 0)" fill="none" stroke="#c4c0bc" stroke-width="0.9"/>
<ellipse cx="6.4" cy="0" rx="4" ry="9.3" transform="rotate(-5 6.4 0)" fill="none" stroke="#c4c0bc" stroke-width="0.9"/>
<ellipse cx="12.8" cy="0" rx="4" ry="9.3" transform="rotate(-5 12.8 0)" fill="none" stroke="#c4c0bc" stroke-width="0.9"/>
<ellipse cx="19.2" cy="0" rx="4" ry="9.3" transform="rotate(-5 19.2 0)" fill="none" stroke="#c4c0bc" stroke-width="0.9"/>
<ellipse cx="25.6" cy="0" rx="4" ry="9.3" transform="rotate(-5 25.6 0)" fill="none" stroke="#c4c0bc" stroke-width="0.9"/>
<ellipse cx="32" cy="0" rx="4" ry="9.3" transform="rotate(-5 32 0)" fill="none" stroke="#c4c0bc" stroke-width="0.9"/>
</g>
<!-- ROD -->
<g transform="translate(543,166.5) rotate(-24.3)">
<rect x="0" y="-13.5" width="150" height="27" fill="url(#rodg)"/>
<path d="M0,-8.5 L-36,-8.5 A8.5,8.5 0 0 0 -36,8.5 L0,8.5 Z" fill="url(#rodg)"/>
<path d="M-36,-8.3 A3.5,8.3 0 0 1 -36,8.3" fill="none" stroke="#3b4345" stroke-width="0.9"/>
<ellipse cx="0" cy="0" rx="4" ry="13.5" fill="#4e5859" stroke="#30373a" stroke-width="0.8"/>
<path d="M0,-8.5 L-2,-8.5 A3,8.5 0 0 0 -2,8.5 L0,8.5 Z" fill="#5d6869"/>
<rect x="15" y="3" width="116" height="4" rx="2" fill="#3d4547" stroke="#889494" stroke-width="0.6"/>
</g>
<!-- GUN SILHOUETTE -->
<path fill="#5f6566" stroke="#2c3133" stroke-width="2" stroke-linejoin="round" d="M663,87 L797,28 C803,25.5 815,25 824,32 L834,52 C836,56 834,61 830,64 C822,75 817,90 817.5,104 C818,125 826,143 846,167 L925.7,260 C937,273 945,283 946,294 C946,300 945,303 943.8,305.3 L932.5,328 L914.4,355 L894,382.3 C889,388 886,392 882.6,393.6 C879,396 876,398 873.6,398.5 L866,397 C860,394 858,390 856,386 L845,372.5 C842,369 842,365 842.5,357.5 C843,352 842,349 840,345 C838,341 835,337 830,335 L820,330 C817,327 816.9,325 816.9,322.5 L816.25,307.5 C815,302 813,300 812.5,298.75 C810,294 808,293 805,291.25 L795,286.25 C792,284 791.25,282 791.25,280 L791.7,270 L792.5,260.6 C791,256 789,254 787.8,252.8 C785,250 783,249 781.6,248 L772.2,243.4 C769,241 768,240 767.5,238.75 L759.7,226.25 C757,222 753,219 750.3,216.9 L739.4,209 L732.3,206 L731.6,201.25 L737,199 L737.5,183 C738.5,180 741,180 744,180.5 L756,180.5 L756,178 L743,174.5 C742.5,165 743,155 744,150 C746,142 752,133 757,128 C761,124 760,119 755,118 C750,118 745,124 742,130 C737,140 736,150 736,158 L736,168.5 L728.5,169 L728.5,187 L725,190 L722,192.5 L707,198.5 L701.5,197 C701,188 699,180 691,165 C685,157 676,151 659.5,145 L666,130 L672,131 L675,128.4 L681,130.3 L686,129 L691.5,131 L760.7,102.6 C764,101 764,96 759.4,95.7 L685,126 L683.3,125.3 L677,110 Z"/>
<clipPath id="gclip"><path d="M663,87 L797,28 C803,25.5 815,25 824,32 L834,52 C836,56 834,61 830,64 C822,75 817,90 817.5,104 C818,125 826,143 846,167 L925.7,260 C937,273 945,283 946,294 C946,300 945,303 943.8,305.3 L932.5,328 L914.4,355 L894,382.3 C889,388 886,392 882.6,393.6 C879,396 876,398 873.6,398.5 L866,397 C860,394 858,390 856,386 L845,372.5 C842,369 842,365 842.5,357.5 C843,352 842,349 840,345 C838,341 835,337 830,335 L820,330 C817,327 816.9,325 816.9,322.5 L816.25,307.5 C815,302 813,300 812.5,298.75 C810,294 808,293 805,291.25 L795,286.25 C792,284 791.25,282 791.25,280 L791.7,270 L792.5,260.6 C791,256 789,254 787.8,252.8 C785,250 783,249 781.6,248 L772.2,243.4 C769,241 768,240 767.5,238.75 L759.7,226.25 C757,222 753,219 750.3,216.9 L739.4,209 L732.3,206 L731.6,201.25 L737,199 L737.5,183 C738.5,180 741,180 744,180.5 L756,180.5 L756,178 L743,174.5 C742.5,165 743,155 744,150 C746,142 752,133 757,128 C761,124 760,119 755,118 C750,118 745,124 742,130 C737,140 736,150 736,158 L736,168.5 L728.5,169 L728.5,187 L725,190 L722,192.5 L707,198.5 L701.5,197 C701,188 699,180 691,165 C685,157 676,151 659.5,145 L666,130 L672,131 L675,128.4 L681,130.3 L686,129 L691.5,131 L760.7,102.6 C764,101 764,96 759.4,95.7 L685,126 L683.3,125.3 L677,110 Z"/></clipPath>
<path d="M663,87 L797,28 C803,25.5 815,25 824,32 L834,52 C836,56 834,61 830,64 C822,75 817,90 817.5,104 C818,125 826,143 846,167 L925.7,260 C937,273 945,283 946,294 C946,300 945,303 943.8,305.3 L932.5,328 L914.4,355 L894,382.3 C889,388 886,392 882.6,393.6 C879,396 876,398 873.6,398.5 L866,397 C860,394 858,390 856,386 L845,372.5 C842,369 842,365 842.5,357.5 C843,352 842,349 840,345 C838,341 835,337 830,335 L820,330 C817,327 816.9,325 816.9,322.5 L816.25,307.5 C815,302 813,300 812.5,298.75 C810,294 808,293 805,291.25 L795,286.25 C792,284 791.25,282 791.25,280 L791.7,270 L792.5,260.6 C791,256 789,254 787.8,252.8 C785,250 783,249 781.6,248 L772.2,243.4 C769,241 768,240 767.5,238.75 L759.7,226.25 C757,222 753,219 750.3,216.9 L739.4,209 L732.3,206 L731.6,201.25 L737,199 L737.5,183 C738.5,180 741,180 744,180.5 L756,180.5 L756,178 L743,174.5 C742.5,165 743,155 744,150 C746,142 752,133 757,128 C761,124 760,119 755,118 C750,118 745,124 742,130 C737,140 736,150 736,158 L736,168.5 L728.5,169 L728.5,187 L725,190 L722,192.5 L707,198.5 L701.5,197 C701,188 699,180 691,165 C685,157 676,151 659.5,145 L666,130 L672,131 L675,128.4 L681,130.3 L686,129 L691.5,131 L760.7,102.6 C764,101 764,96 759.4,95.7 L685,126 L683.3,125.3 L677,110 Z" fill="none" stroke="#41474a" stroke-width="5" clip-path="url(#gclip)"/>
<path d="M663,87 L797,28 C803,25.5 815,25 824,32 L834,52 C836,56 834,61 830,64 C822,75 817,90 817.5,104 C818,125 826,143 846,167 L925.7,260 C937,273 945,283 946,294 C946,300 945,303 943.8,305.3 L932.5,328 L914.4,355 L894,382.3 C889,388 886,392 882.6,393.6 C879,396 876,398 873.6,398.5 L866,397 C860,394 858,390 856,386 L845,372.5 C842,369 842,365 842.5,357.5 C843,352 842,349 840,345 C838,341 835,337 830,335 L820,330 C817,327 816.9,325 816.9,322.5 L816.25,307.5 C815,302 813,300 812.5,298.75 C810,294 808,293 805,291.25 L795,286.25 C792,284 791.25,282 791.25,280 L791.7,270 L792.5,260.6 C791,256 789,254 787.8,252.8 C785,250 783,249 781.6,248 L772.2,243.4 C769,241 768,240 767.5,238.75 L759.7,226.25 C757,222 753,219 750.3,216.9 L739.4,209 L732.3,206 L731.6,201.25 L737,199 L737.5,183 C738.5,180 741,180 744,180.5 L756,180.5 L756,178 L743,174.5 C742.5,165 743,155 744,150 C746,142 752,133 757,128 C761,124 760,119 755,118 C750,118 745,124 742,130 C737,140 736,150 736,158 L736,168.5 L728.5,169 L728.5,187 L725,190 L722,192.5 L707,198.5 L701.5,197 C701,188 699,180 691,165 C685,157 676,151 659.5,145 L666,130 L672,131 L675,128.4 L681,130.3 L686,129 L691.5,131 L760.7,102.6 C764,101 764,96 759.4,95.7 L685,126 L683.3,125.3 L677,110 Z" fill="none" stroke="#2c3133" stroke-width="2" stroke-linejoin="round"/>

<!-- back edge highlight -->
<path d="M827.5,66 C820,77 815.5,91 816,104 C816.5,126 824.5,145 844.3,168.8 L923.8,261.8 C934.5,274.5 942.5,284 943.5,294" fill="none" stroke="#8a9595" stroke-width="0.8"/>
<!-- housing left face -->
<path d="M663,87 L672,88.5 L683.3,125.3 L677,121 Z" fill="#4a5052"/>
<!-- housing top highlight -->
<path d="M672,89 L798,33 C806,30 815,30 822,36" fill="none" stroke="#8e9a9a" stroke-width="0.8"/>
<!-- housing slot -->
<g transform="translate(695.5,99.8) rotate(-23.3)">
<rect x="-11" y="-11" width="152" height="22" rx="11" fill="none" stroke="#2c3032" stroke-width="1.5"/>
<path d="M-9,6 C-6,10 -2,11.5 2,11.5 L130,11.5 C136,11.5 140,7 141,2" fill="none" stroke="#a6b2b2" stroke-width="0.8"/>
</g>
<!-- trigger triangle -->
<path d="M689.5,146 L730.8,129 L711.9,178.7 Z" fill="none" stroke="#2c3032" stroke-width="1.3"/>
<path d="M729,133 L712,175" fill="none" stroke="#a6b2b2" stroke-width="0.7"/>
<!-- trigger/frame pins -->
<ellipse cx="723.5" cy="179" rx="4.5" ry="7" fill="#3d4244"/>
<ellipse cx="745" cy="189" rx="6" ry="8" fill="#44494b"/>
<ellipse cx="741" cy="189" rx="3" ry="7" fill="#5a6062" stroke="#8e9a9a" stroke-width="0.5"/>
<!-- grip panel -->
<path d="M771,98 L810.5,83 C806,96 805,112 812.8,127.4 C818,140 830,158 845.7,172 L929,272 C936,281 938,292 937,300.8 L916.6,334.7 L894,368.7 L876,387.5 L870,386 L856,367.5 L852.5,341.25 C850,337 848,334 846.25,332.5 L837.5,326.25 C833,324 831.25,323 831.25,322.5 L830,305 C829,300 827,296 825,293.75 L815,283.75 C809,280 805,279 805,277.8 L803.4,265.3 C802,257 800,252 798.75,249.7 C796,245 794,243 792.5,241.9 L780,235.6 C775,232 771,229 769,226.25 L762.8,215.3 L762,146.6 L771,142 Z" fill="none" stroke="#2f3436" stroke-width="1.2"/>
<path d="M936,292 L915,330 L893,364 L874,384" fill="none" stroke="#b0bcbc" stroke-width="0.8"/>
<!-- FLY GUN -->
<g transform="translate(777,183) rotate(50.4) scale(1.12,1.02)" font-family="Liberation Sans" font-weight="bold" font-size="30.5" letter-spacing="4.6">
<text x="0" y="0" fill="#2c3032" stroke="#2c3032" stroke-width="4.2" stroke-linejoin="round">FLY GUN</text>
<text x="0" y="0" fill="#5f6566" stroke="#5f6566" stroke-width="2.2" stroke-linejoin="round">FLY GUN</text>
</g>
<circle cx="868" cy="358.5" r="2.2" fill="#eef0f0" stroke="#2a2e30" stroke-width="0.8"/>

</svg>

</div>
</body></html>
